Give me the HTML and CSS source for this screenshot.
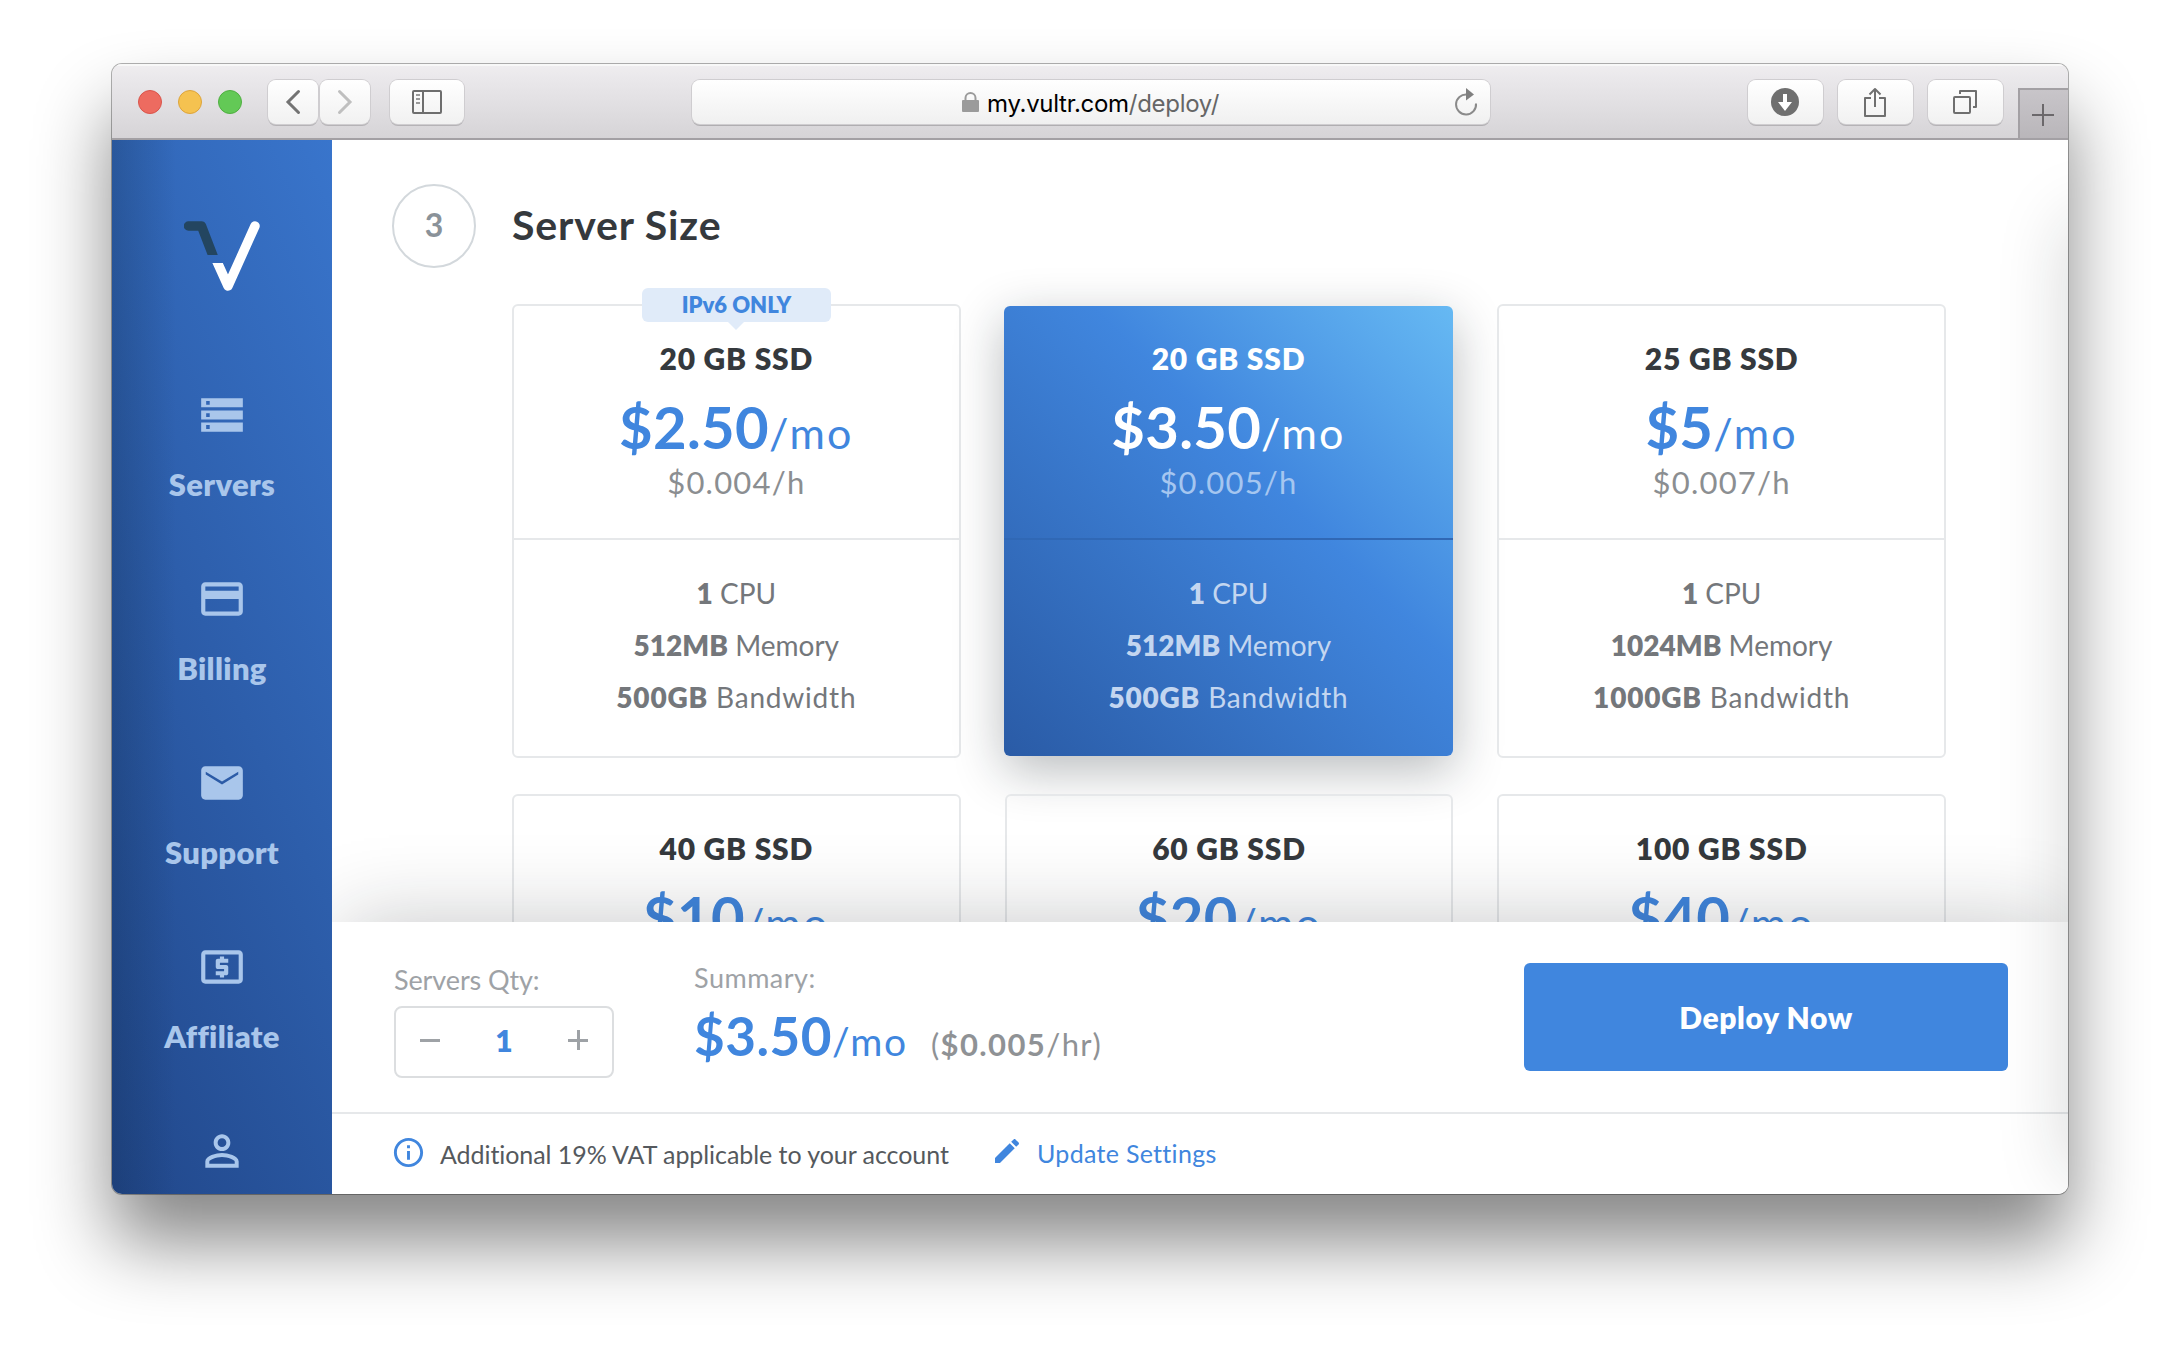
FILE: index.html
```html
<!DOCTYPE html>
<html lang="en">
<head>
<meta charset="utf-8">
<title>Deploy</title>
<link rel="stylesheet" href="styles.css">
</head>
<body>
<div class="window">
  <header class="toolbar">
    <div class="lights"><i class="light red"></i><i class="light yellow"></i><i class="light green"></i></div>
    <div class="history">
      <button class="tool small" aria-label="Back"><svg width="16" height="26" viewBox="0 0 16 26"><path d="M13.5 2.500L3 13l10.500 10.500" fill="none" stroke="#737373" stroke-width="3" stroke-linecap="round"/></svg></button>
      <button class="tool small" aria-label="Forward"><svg width="16" height="26" viewBox="0 0 16 26"><path d="M2.500 2.500L13 13 2.500 23.500" fill="none" stroke="#bfbfbf" stroke-width="3" stroke-linecap="round"/></svg></button>
    </div>
    <button class="tool side" aria-label="Sidebar"><svg width="30" height="24" viewBox="0 0 30 24"><rect x="1" y="1" width="28" height="22" rx="1" fill="none" stroke="#6e6e6e" stroke-width="2"/><path d="M11 1v22" stroke="#6e6e6e" stroke-width="2"/><path d="M4 5h4M4 9h4M4 13h4" stroke="#9a9a9a" stroke-width="2"/></svg></button>
    <div class="address">
      <svg class="lock" width="17" height="20" viewBox="0 0 17 20"><rect y="8" width="17" height="12" rx="1" fill="#9b9b9b"/><path d="M3.500 9V6a5 5 0 0 1 10 0v3" fill="none" stroke="#9b9b9b" stroke-width="2"/></svg>
      <span class="url">my.vultr.com<span class="path">/deploy/</span></span>
      <svg class="reload" width="24" height="28" viewBox="0 0 24 28"><path d="M13 6.500A10 10 0 1 0 22 15.500" fill="none" stroke="#8a8a8a" stroke-width="2"/><path d="M12 0l8 6.500-8 6z" fill="#7f7f7f"/></svg>
    </div>
    <div class="actions">
      <button class="tool" aria-label="Downloads"><svg width="28" height="28" viewBox="0 0 28 28"><circle cx="14" cy="14" r="14" fill="#6f6f6f"/><path d="M12 6h4v8h5l-7 9-7-9h5z" fill="#fff"/></svg></button>
      <button class="tool" aria-label="Share"><svg width="24" height="32" viewBox="0 0 24 32"><path d="M8 12H2v18h20V12h-6M12 21V3M6.500 8.500L12 3l5.500 5.500" fill="none" stroke="#6f6f6f" stroke-width="2" stroke-linejoin="round"/></svg></button>
      <button class="tool" aria-label="Tabs"><svg width="24" height="24" viewBox="0 0 24 24"><rect x="1" y="7" width="16" height="16" rx="1" fill="none" stroke="#6f6f6f" stroke-width="2"/><path d="M7 4V1h16v16h-3" fill="none" stroke="#6f6f6f" stroke-width="2" stroke-linejoin="round"/></svg></button>
    </div>
    <div class="newtab"><svg width="22" height="22" viewBox="0 0 22 22"><path d="M11 0v22M0 11h22" stroke="#6b686b" stroke-width="2"/></svg></div>
  </header>
  <div class="page">
    <nav class="sidebar">
      <svg class="logo" width="76" height="70" viewBox="0 0 76 70"><path d="M4.500 5H17.500L31 40" fill="none" stroke="#234560" stroke-width="9.500" stroke-linecap="round" stroke-linejoin="round" clip-path="url(#cut1)"/><path d="M30 34L44 65 71 5" fill="none" stroke="#fff" stroke-width="9.500" stroke-linecap="round" stroke-linejoin="round" clip-path="url(#cut2)"/><defs><clipPath id="cut1"><rect width="76" height="34"/></clipPath><clipPath id="cut2"><path d="M0 42h44V0h32v70H0z"/></clipPath></defs></svg>
      <a class="item"><svg viewBox="0 0 24 24"><path d="M2 20h20v-4.400H2zm2.400-3.200h1.700v1.900H4.400zM2 4v4.300h20V4zm4.100 3.100H4.400V5.300h1.700zM2 14.200h20V9.800H2zm2.400-3.100h1.700v1.800H4.400z" fill-rule="evenodd"/></svg><span>Servers</span></a>
      <a class="item"><svg viewBox="0 0 24 24"><path d="M20 4H4c-1.110 0-1.990.89-1.990 2L2 18c0 1.110.89 2 2 2h16c1.110 0 2-.89 2-2V6c0-1.110-.89-2-2-2zm0 14H4v-6h16v6zm0-10H4V6h16v2z"/></svg><span>Billing</span></a>
      <a class="item"><svg viewBox="0 0 24 24"><path d="M20 4H4c-1.100 0-1.990.9-1.990 2L2 18c0 1.100.9 2 2 2h16c1.100 0 2-.9 2-2V6c0-1.100-.9-2-2-2zm-.2 3.900L12 12.700 4.200 7.900V6.600L12 11.300l7.800-4.700z"/></svg><span>Support</span></a>
      <a class="item"><svg viewBox="0 0 24 24"><path d="M11 17h2v-1h1c.55 0 1-.45 1-1v-3c0-.55-.45-1-1-1h-3v-1h4V8h-2V7h-2v1h-1c-.55 0-1 .45-1 1v3c0 .55.45 1 1 1h3v1H9v2h2v1zm9-13H4c-1.110 0-1.990.89-1.990 2L2 18c0 1.110.89 2 2 2h16c1.110 0 2-.89 2-2V6c0-1.110-.89-2-2-2zm0 14H4V6h16v12z"/></svg><span>Affiliate</span></a>
      <a class="item"><svg viewBox="0 0 24 24"><path d="M12 5.900c1.160 0 2.100.94 2.100 2.100s-.94 2.100-2.100 2.100S9.900 9.160 9.900 8s.94-2.100 2.100-2.100m0 9c2.970 0 6.100 1.460 6.100 2.100v1.100H5.900V17c0-.64 3.130-2.100 6.100-2.100M12 4C9.790 4 8 5.790 8 8s1.790 4 4 4 4-1.790 4-4-1.790-4-4-4zm0 9c-2.670 0-8 1.340-8 4v3h16v-3c0-2.660-5.330-4-8-4z"/></svg></a>
    </nav>
    <main class="main">
      <section class="content">
        <div class="heading"><span class="step">3</span><h1>Server Size</h1></div>
        <div class="plans">
          <article class="plan">
            <span class="badge">IPv6 ONLY</span>
            <div class="top"><h2>20 GB SSD</h2><p class="price"><b>$2.50</b><span>/mo</span></p><p class="hour">$0.004/h</p></div>
            <ul><li><b>1</b> CPU</li><li><b>512MB</b> Memory</li><li><b>500GB</b> Bandwidth</li></ul>
          </article>
          <article class="plan selected">
            <div class="top"><h2>20 GB SSD</h2><p class="price"><b>$3.50</b><span>/mo</span></p><p class="hour">$0.005/h</p></div>
            <ul><li><b>1</b> CPU</li><li><b>512MB</b> Memory</li><li><b>500GB</b> Bandwidth</li></ul>
          </article>
          <article class="plan">
            <div class="top"><h2>25 GB SSD</h2><p class="price"><b>$5</b><span>/mo</span></p><p class="hour">$0.007/h</p></div>
            <ul><li><b>1</b> CPU</li><li><b>1024MB</b> Memory</li><li><b>1000GB</b> Bandwidth</li></ul>
          </article>
          <article class="plan"><div class="top"><h2>40 GB SSD</h2><p class="price"><b>$10</b><span>/mo</span></p></div></article>
          <article class="plan"><div class="top"><h2>60 GB SSD</h2><p class="price"><b>$20</b><span>/mo</span></p></div></article>
          <article class="plan"><div class="top"><h2>100 GB SSD</h2><p class="price"><b>$40</b><span>/mo</span></p></div></article>
        </div>
      </section>
      <footer class="footer">
        <div class="order">
          <div class="qty">
            <span class="label">Servers Qty:</span>
            <div class="stepper"><i class="minus"></i><b>1</b><i class="plus"></i></div>
          </div>
          <div class="summary">
            <span class="label">Summary:</span>
            <p class="total"><b>$3.50</b><span class="per">/mo</span><span class="rate">(<b>$0.005</b>/hr)</span></p>
          </div>
          <button class="deploy">Deploy Now</button>
        </div>
        <div class="notes">
          <svg class="info" width="35" height="35" viewBox="0 0 24 24"><path d="M11 17h2v-6h-2v6zm1-15C6.480 2 2 6.480 2 12s4.480 10 10 10 10-4.480 10-10S17.520 2 12 2zm0 18c-4.410 0-8-3.590-8-8s3.590-8 8-8 8 3.590 8 8-3.590 8-8 8zM11 9h2V7h-2v2z"/></svg>
          <span class="vat">Additional 19% VAT applicable to your account</span>
          <svg class="pencil" width="32" height="32" viewBox="0 0 24 24"><path d="M3 17.250V21h3.750L17.810 9.940l-3.750-3.750L3 17.250zM20.710 7.040c.39-.39.39-1.020 0-1.410l-2.340-2.340c-.39-.39-1.020-.39-1.410 0l-1.830 1.830 3.750 3.750 1.830-1.830z"/></svg>
          <a class="update">Update Settings</a>
        </div>
      </footer>
    </main>
  </div>
</div>
</body>
</html>
```
FILE: styles.css
```css
* { box-sizing: border-box; }
body { margin: 0; min-height: 1354px; padding: 64px 112px 0; background: #fff; font-family: Lato, "Open Sans", sans-serif; color: #35393d; }
h1, h2, p, ul { margin: 0; padding: 0; }
ul { list-style: none; }
button { font: inherit; border: 0; padding: 0; }
svg { display: block; }

.window { width: 1956px; height: 1130px; border-radius: 10px; overflow: hidden; box-shadow: 0 0 0 1px rgba(0,0,0,.3), 0 48px 76px rgba(0,0,0,.48); }

.toolbar { position: relative; display: flex; align-items: center; height: 76px; padding: 2px 0 0 26px; background: linear-gradient(#f0eef0, #ebe9ec 15%, #d6d4d7); border-bottom: 2px solid #a3a0a4; box-shadow: inset 0 2px #f8f8f8; }
.lights { display: flex; gap: 16px; width: 130px; }
.light { width: 24px; height: 24px; border-radius: 50%; }
.red { background: #ed6b60; border: 1px solid #d9544b; }
.yellow { background: #f5c250; border: 1px solid #dda43b; }
.green { background: #63c956; border: 1px solid #4faf41; }
.history { display: flex; gap: 2px; }
.tool { display: flex; align-items: center; justify-content: center; width: 75px; height: 44px; border-radius: 8px; background: linear-gradient(#fff, #f1f1f1); box-shadow: 0 0 0 1px #cfcdd0, 0 2px 0 #b5b3b6; }
.small { width: 50px; }
.side { width: 74px; margin-left: 20px; }
.address { position: relative; display: flex; align-items: center; width: 798px; height: 44px; margin-left: 228px; padding-left: 270px; border-radius: 8px; background: linear-gradient(#fff, #f0f0f0); box-shadow: 0 0 0 1px #cfcdd0, 0 2px 0 #b0aeb1; }
.url { margin-left: 8px; padding-top: 3px; font: 24px/41px Inter, sans-serif; letter-spacing: -.29px; color: #000; white-space: nowrap; }
.path { color: #666; }
.reload { margin-left: auto; margin-right: 12px; }
.actions { display: flex; gap: 15px; margin-left: 258px; }
.actions svg { margin-right: 1px; }
.newtab { display: flex; align-items: center; justify-content: center; align-self: flex-end; width: 50px; height: 50px; margin-left: auto; padding: 2px 2px 0 0; background: linear-gradient(#c8c5c9, #b9b6ba); border: solid #a3a0a4; border-width: 2px 0 0 2px; }

.page { display: flex; height: 1054px; }
.sidebar { width: 220px; overflow: hidden; background: linear-gradient(90deg, rgba(15,40,70,.24), rgba(15,40,70,0) 64px), linear-gradient(66deg, #21478a, #3975cc); }
.logo { margin: 81px auto 0 72px; }
.item { display: flex; flex-direction: column; align-items: center; height: 184px; color: #a9c6eb; font-size: 31px; font-weight: 800; line-height: 36px; letter-spacing: .3px; }
.logo + .item { margin-top: 99px; }
.item svg { width: 50px; height: 50px; fill: currentColor; }
.item span { margin-top: 26px; }

.main { position: relative; display: flex; flex-direction: column; width: 1736px; background: #fff; overflow: hidden; }
.main::after { content: ""; position: absolute; left: 100%; top: 80px; bottom: 20px; width: 60px; box-shadow: 0 0 70px rgba(20,30,30,.18); z-index: 3; }
.content { height: 782px; padding: 44px 0 0 60px; overflow: hidden; }
.heading { display: flex; align-items: center; gap: 36px; }
.step { width: 84px; height: 84px; border: 2px solid #d3d8dc; border-radius: 50%; text-align: center; font-size: 32px; font-weight: 700; line-height: 78px; color: #8a9299; }
h1 { font-size: 41px; font-weight: 700; line-height: 46px; letter-spacing: .85px; padding-bottom: 2px; }
.plans { display: grid; grid-template-columns: repeat(3, 1fr); grid-auto-rows: 454px; gap: 36px 44px; width: 1434px; margin: 36px 0 0 120px; }
.plan { position: relative; border: 2px solid #e6e8ea; border-radius: 6px; text-align: center; }
.top { height: 234px; padding-top: 34px; border-bottom: 2px solid #e6e8ea; }
h2 { font-size: 30px; font-weight: 800; line-height: 36px; letter-spacing: .8px; }
.price { height: 64px; margin-top: 19px; line-height: 64px; color: #4086de; font-size: 43px; letter-spacing: 2.2px; white-space: nowrap; }
.price b { font-size: 58px; font-weight: 700; letter-spacing: .3px; }
.hour { margin-top: 5px; font-size: 31px; line-height: 36px; letter-spacing: 1.2px; color: #8b8e91; }
.plan ul { padding-top: 27px; font-size: 28px; line-height: 52px; color: #74777b; }
.plan ul b { font-weight: 800; }
.plan li:last-child { letter-spacing: .8px; }
.selected { margin: 2px 0 2px -1px; border: 0; color: #fff; background: linear-gradient(45deg, #2a5ba6, #4086de 60%, #66b9f3); box-shadow: 0 14px 50px rgba(20,30,35,.3); }
.selected .top { border-color: #3068b5; }
.selected .price { color: #fff; }
.selected .hour { color: #a5c6f0; }
.selected ul { color: #c3d6f0; }
.badge { position: absolute; left: 128px; top: -18px; width: 189px; height: 34px; border-radius: 6px; background: #e0ebf9; color: #4086de; font-size: 22px; font-weight: 800; line-height: 33px; }
.badge::after { content: ""; position: absolute; left: 86px; top: 34px; border: solid transparent; border-width: 8px 8px 0; border-top-color: #e0ebf9; }

.footer { position: relative; z-index: 2; height: 272px; background: #fff; box-shadow: 0 -10px 80px -10px rgba(20,25,30,.24); }
.order { display: flex; height: 192px; padding: 0 60px 0 62px; border-bottom: 2px solid #e6e8ea; }
.qty { width: 220px; padding-top: 42px; }
.label { display: block; font-size: 27px; line-height: 32px; color: #9ea2a6; }
.qty .label { letter-spacing: -.1px; }
.summary .label { letter-spacing: .5px; }
.stepper { display: flex; align-items: center; justify-content: space-between; height: 72px; margin-top: 10px; padding: 0 24px 4px; border: 2px solid #dcdee0; border-radius: 8px; }
.stepper b { font-size: 30px; font-weight: 800; line-height: 36px; color: #4086de; }
.minus, .plus { width: 20px; height: 20px; background: linear-gradient(#9ea2a6, #9ea2a6) center / 20px 3px no-repeat; }
.plus { background: linear-gradient(#9ea2a6, #9ea2a6) center / 20px 3px no-repeat, linear-gradient(#9ea2a6, #9ea2a6) center / 3px 20px no-repeat; }
.summary { padding-top: 40px; margin-left: 80px; }
.total { display: flex; align-items: baseline; height: 60px; margin-top: 12px; line-height: 60px; color: #4086de; white-space: nowrap; }
.total > b { font-size: 53px; font-weight: 700; letter-spacing: .5px; }
.per { font-size: 39px; letter-spacing: 1.7px; }
.rate { margin-left: 23px; font-size: 31px; letter-spacing: 1.4px; color: #8f9295; }
.rate b { font-weight: 700; }
.deploy { width: 484px; height: 108px; margin: 41px 0 0 auto; border-radius: 6px; background: #4086de; color: #fff; font-size: 30px; font-weight: 800; letter-spacing: .6px; }
.notes { display: flex; align-items: center; height: 80px; padding-left: 59px; font-size: 25px; line-height: 30px; color: #55595d; }
.notes svg { fill: #4086de; margin-bottom: 3px; }
.vat { width: 510px; margin-left: 14px; letter-spacing: -.06px; white-space: nowrap; }
.notes .pencil { margin: 0 0 6px 41px; }
.update { margin: 0 0 2px 14px; letter-spacing: .3px; color: #4086de; }
```
